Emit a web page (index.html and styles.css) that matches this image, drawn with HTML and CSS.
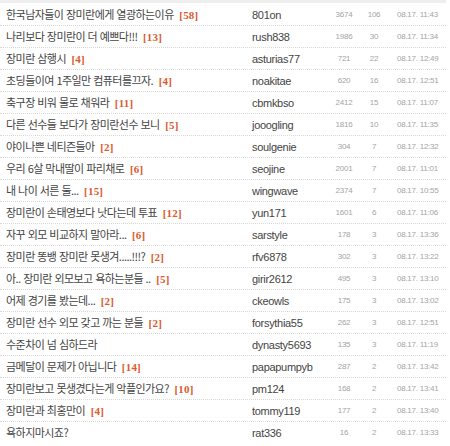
FILE: index.html
```html
<!DOCTYPE html>
<html lang="ko">
<head>
<meta charset="utf-8">
<link rel="stylesheet" href="styles.css">
</head>
<body>
<div class="board">
  <div class="topbar"></div>
  <ul class="list">
    <li class="row"><span class="title">한국남자들이 장미란에게 열광하는이유 <b class="cnt">[58]</b></span><span class="user">801on</span><span class="num">3674</span><span class="num">106</span><span class="date">08.17. 11:43</span></li>
    <li class="row"><span class="title">나리보다 장미란이 더 예쁘다!!! <b class="cnt">[13]</b></span><span class="user">rush838</span><span class="num">1986</span><span class="num">30</span><span class="date">08.17. 11:34</span></li>
    <li class="row"><span class="title">장미란 삼행시 <b class="cnt">[4]</b></span><span class="user">asturias77</span><span class="num">721</span><span class="num">22</span><span class="date">08.17. 12:49</span></li>
    <li class="row"><span class="title">초딩들이여 1주일만 컴퓨터를끄자. <b class="cnt">[4]</b></span><span class="user">noakitae</span><span class="num">620</span><span class="num">16</span><span class="date">08.17. 12:51</span></li>
    <li class="row"><span class="title">축구장 비워 물로 채워라 <b class="cnt">[11]</b></span><span class="user">cbmkbso</span><span class="num">2412</span><span class="num">15</span><span class="date">08.17. 11:07</span></li>
    <li class="row"><span class="title">다른 선수들 보다가 장미란선수 보니 <b class="cnt">[5]</b></span><span class="user">jooogling</span><span class="num">1816</span><span class="num">10</span><span class="date">08.17. 11:35</span></li>
    <li class="row"><span class="title">야이나쁜 네티즌들아 <b class="cnt">[2]</b></span><span class="user">soulgenie</span><span class="num">304</span><span class="num">7</span><span class="date">08.17. 12:32</span></li>
    <li class="row"><span class="title">우리 6살 막내딸이 파리채로 <b class="cnt">[6]</b></span><span class="user">seojine</span><span class="num">2001</span><span class="num">7</span><span class="date">08.17. 11:01</span></li>
    <li class="row"><span class="title">내 나이 서른 둘... <b class="cnt">[15]</b></span><span class="user">wingwave</span><span class="num">2374</span><span class="num">7</span><span class="date">08.17. 10:55</span></li>
    <li class="row"><span class="title">장미란이 손태영보다 낫다는데 투표 <b class="cnt">[12]</b></span><span class="user">yun171</span><span class="num">1601</span><span class="num">6</span><span class="date">08.17. 11:06</span></li>
    <li class="row"><span class="title">자꾸 외모 비교하지 말아라... <b class="cnt">[6]</b></span><span class="user">sarstyle</span><span class="num">178</span><span class="num">3</span><span class="date">08.17. 13:36</span></li>
    <li class="row"><span class="title">장미란 똥뱅 장미란 못생겨.....!!!? <b class="cnt">[2]</b></span><span class="user">rfv6878</span><span class="num">302</span><span class="num">3</span><span class="date">08.17. 13:22</span></li>
    <li class="row"><span class="title">아.. 장미란 외모보고 욕하는분들 .. <b class="cnt">[5]</b></span><span class="user">girir2612</span><span class="num">495</span><span class="num">3</span><span class="date">08.17. 13:10</span></li>
    <li class="row"><span class="title">어제 경기를 봤는데... <b class="cnt">[2]</b></span><span class="user">ckeowls</span><span class="num">175</span><span class="num">3</span><span class="date">08.17. 13:02</span></li>
    <li class="row"><span class="title">장미란 선수 외모 갖고 까는 분들 <b class="cnt">[2]</b></span><span class="user">forsythia55</span><span class="num">262</span><span class="num">3</span><span class="date">08.17. 12:51</span></li>
    <li class="row"><span class="title">수준차이 넘 심하드라</span><span class="user">dynasty5693</span><span class="num">135</span><span class="num">3</span><span class="date">08.17. 11:19</span></li>
    <li class="row"><span class="title">금메달이 문제가 아닙니다 <b class="cnt">[14]</b></span><span class="user">papapumpyb</span><span class="num">287</span><span class="num">2</span><span class="date">08.17. 13:42</span></li>
    <li class="row"><span class="title">장미란보고 못생겼다는게 악플인가요? <b class="cnt">[10]</b></span><span class="user">pm124</span><span class="num">168</span><span class="num">2</span><span class="date">08.17. 13:41</span></li>
    <li class="row"><span class="title">장미란과 최홍만이 <b class="cnt">[4]</b></span><span class="user">tommy119</span><span class="num">177</span><span class="num">2</span><span class="date">08.17. 13:40</span></li>
    <li class="row"><span class="title">욕하지마시죠?</span><span class="user">rat336</span><span class="num">16</span><span class="num">2</span><span class="date">08.17. 13:33</span></li>
  </ul>
</div>
</body>
</html>
```

FILE: styles.css
```css
html, body {
  margin: 0;
  padding: 0;
  background: #fff;
}

.board {
  width: 446px;
  font-family: "Noto Sans CJK KR", "Liberation Sans", sans-serif;
}

.topbar {
  height: 3px;
  background: #eeeeee;
  margin-bottom: 1px;
}

.list {
  list-style: none;
  margin: 0;
  padding: 0;
}

.row {
  display: grid;
  grid-template-columns: 252px 82px 20px 40px 1fr;
  align-items: center;
  height: 21px;
  border-bottom: 1px dotted #d8d8d8;
}

.row:last-child {
  border-bottom: none;
}

.title {
  padding-left: 6px;
  font-size: 11px;
  letter-spacing: -0.55px;
  color: #444;
  white-space: nowrap;
  overflow: hidden;
  line-height: 21px;
}

.cnt {
  font-family: "Liberation Serif", serif;
  font-weight: bold;
  font-size: 11px;
  letter-spacing: 0.2px;
  color: #dc5a2f;
  margin-left: 3px;
}

.user {
  font-family: "Liberation Sans", sans-serif;
  font-size: 11px;
  letter-spacing: -0.3px;
  color: #444;
}

.num {
  text-align: center;
  font-family: "Liberation Sans", sans-serif;
  font-size: 8px;
  letter-spacing: -0.25px;
  color: #a4a4a4;
}

.date {
  padding-left: 3px;
  font-family: "Liberation Sans", sans-serif;
  font-size: 8px;
  letter-spacing: -0.25px;
  color: #a4a4a4;
  white-space: nowrap;
}
```
